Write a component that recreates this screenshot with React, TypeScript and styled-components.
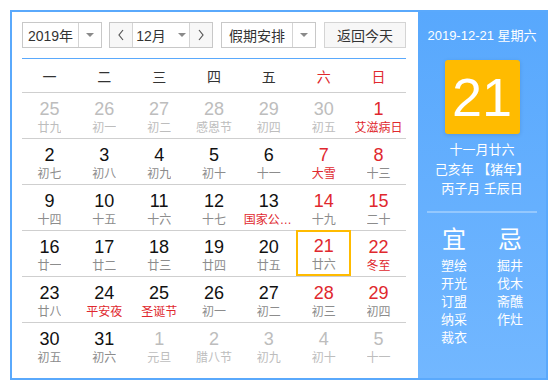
import React from 'react';
import styled, { createGlobalStyle } from 'styled-components';

const GlobalStyle = createGlobalStyle`
  html, body {
    margin: 0;
    padding: 0;
    background: #fff;
    font-family: "Liberation Sans", "Noto Sans CJK SC", sans-serif;
  }
`;

const Page = styled.div`
  padding: 10px;
`;

const Calendar = styled.div`
  display: flex;
  width: 534px;
  height: 366px;
  border: 2px solid #5aa9fc;
`;

const Main = styled.div`
  width: 384px;
  padding: 10px 12px 0 10px;
  background: #fff;
`;

const Toolbar = styled.div`
  display: flex;
  align-items: center;
  height: 26px;
  margin-bottom: 10px;
`;

const Select = styled.div<{ $w: number; $ml?: number }>`
  display: flex;
  box-sizing: border-box;
  width: ${p => p.$w}px;
  height: 26px;
  margin-left: ${p => p.$ml ?? 0}px;
  border: 1px solid #c8c8c8;
  background: #fff;
  font-size: 14px;
  color: #333;
`;

const SelectText = styled.div`
  flex: 1;
  display: flex;
  align-items: center;
  justify-content: center;
`;

const Arrow = styled.div<{ $divider?: boolean }>`
  width: 22px;
  display: flex;
  align-items: center;
  justify-content: center;
  border-left: ${p => (p.$divider ? '1px solid #d4d4d4' : 'none')};
  &::after {
    content: '';
    border-left: 4px solid transparent;
    border-right: 4px solid transparent;
    border-top: 4px solid #8a8a8a;
  }
`;

const NavButton = styled.div`
  width: 22px;
  display: flex;
  align-items: center;
  justify-content: center;
  background: #f7f7f7;
  color: #555;
`;

const MonthText = styled.div`
  flex: 1;
  display: flex;
  align-items: center;
  justify-content: center;
  gap: 12px;
  border-left: 1px solid #d4d4d4;
  border-right: 1px solid #d4d4d4;
  &::after {
    content: '';
    border-left: 4px solid transparent;
    border-right: 4px solid transparent;
    border-top: 4px solid #8a8a8a;
  }
`;

const TodayButton = styled.div`
  box-sizing: border-box;
  margin-left: auto;
  width: 82px;
  height: 26px;
  display: flex;
  align-items: center;
  justify-content: center;
  border: 1px solid #d4d4d4;
  background: #f7f7f7;
  font-size: 14px;
  color: #333;
`;

const Table = styled.div`
  border-top: 1px solid #5aa9fc;
`;

const WeekHead = styled.div`
  display: grid;
  grid-template-columns: repeat(7, 1fr);
  height: 33px;
  border-bottom: 1px solid #cfcfcf;
`;

const WeekName = styled.div<{ $red?: boolean }>`
  display: flex;
  align-items: center;
  justify-content: center;
  font-size: 14px;
  color: ${p => (p.$red ? '#e0282e' : '#333')};
`;

const Row = styled.div<{ $last?: boolean }>`
  display: grid;
  grid-template-columns: repeat(7, 1fr);
  height: 45px;
  border-bottom: ${p => (p.$last ? 'none' : '1px solid #cfcfcf')};
`;

const Cell = styled.div<{ $selected?: boolean }>`
  box-sizing: border-box;
  display: flex;
  flex-direction: column;
  align-items: center;
  padding-top: ${p => (p.$selected ? '3px' : '5px')};
  border: ${p => (p.$selected ? '2px solid #ffbb00' : 'none')};
  margin-top: ${p => (p.$selected ? '-1px' : '0')};
  height: ${p => (p.$selected ? '46px' : '45px')};
`;

const DayNum = styled.div<{ $tone: string }>`
  font-size: 18px;
  line-height: 22px;
  color: ${p => p.$tone};
`;

const Lunar = styled.div<{ $tone: string }>`
  font-size: 12px;
  line-height: 16px;
  max-width: 50px;
  white-space: nowrap;
  overflow: hidden;
  text-overflow: ellipsis;
  color: ${p => p.$tone};
`;

const Side = styled.div`
  width: 128px;
  display: flex;
  flex-direction: column;
  align-items: center;
  background: linear-gradient(180deg, #58a8fd 0%, #72b7ff 100%);
  color: #fff;
`;

const SideDate = styled.div`
  margin-top: 14px;
  font-size: 13px;
  line-height: 20px;
`;

const BigDay = styled.div`
  margin-top: 14px;
  width: 75px;
  height: 74px;
  display: flex;
  align-items: center;
  justify-content: center;
  background: #ffbb00;
  border-radius: 3px;
  box-shadow: 0 1px 4px rgba(0, 0, 0, 0.12);
  font-size: 54px;
  line-height: 1;
`;

const LunarInfo = styled.div`
  margin-top: 6px;
  font-size: 13px;
  line-height: 19.5px;
  text-align: center;
`;

const Divider = styled.div`
  margin-top: 12px;
  width: 110px;
  height: 2px;
  background: rgba(255, 255, 255, 0.3);
`;

const Almanac = styled.div`
  margin-top: 10px;
  display: grid;
  grid-template-columns: 40px 40px;
  column-gap: 16px;
`;

const AlmanacCol = styled.div`
  display: flex;
  flex-direction: column;
  align-items: center;
`;

const AlmanacTitle = styled.div`
  font-size: 24px;
  line-height: 34px;
`;

const AlmanacItem = styled.div`
  font-size: 13px;
  line-height: 18px;
`;

const Chevron: React.FC<{ dir: 'left' | 'right' }> = ({ dir }) => (
  <svg width="8" height="12" viewBox="0 0 8 12">
    <path
      d={dir === 'left' ? 'M6 1 L2 6 L6 11' : 'M2 1 L6 6 L2 11'}
      fill="none"
      stroke="#555"
      strokeWidth="1.2"
    />
  </svg>
);

type Day = { d: number; l: string; kind?: 'other' | 'red'; lred?: boolean; sel?: boolean };

const BLACK = '#111';
const RED = '#e0282e';
const GRAY = '#bdbdbd';
const LGRAY = '#8c8c8c';

const weeks: Day[][] = [
  [
    { d: 25, l: '廿九', kind: 'other' },
    { d: 26, l: '初一', kind: 'other' },
    { d: 27, l: '初二', kind: 'other' },
    { d: 28, l: '感恩节', kind: 'other' },
    { d: 29, l: '初四', kind: 'other' },
    { d: 30, l: '初五', kind: 'other' },
    { d: 1, l: '艾滋病日', kind: 'red', lred: true },
  ],
  [
    { d: 2, l: '初七' },
    { d: 3, l: '初八' },
    { d: 4, l: '初九' },
    { d: 5, l: '初十' },
    { d: 6, l: '十一' },
    { d: 7, l: '大雪', kind: 'red', lred: true },
    { d: 8, l: '十三', kind: 'red' },
  ],
  [
    { d: 9, l: '十四' },
    { d: 10, l: '十五' },
    { d: 11, l: '十六' },
    { d: 12, l: '十七' },
    { d: 13, l: '国家公祭日', lred: true },
    { d: 14, l: '十九', kind: 'red' },
    { d: 15, l: '二十', kind: 'red' },
  ],
  [
    { d: 16, l: '廿一' },
    { d: 17, l: '廿二' },
    { d: 18, l: '廿三' },
    { d: 19, l: '廿四' },
    { d: 20, l: '廿五' },
    { d: 21, l: '廿六', kind: 'red', sel: true },
    { d: 22, l: '冬至', kind: 'red', lred: true },
  ],
  [
    { d: 23, l: '廿八' },
    { d: 24, l: '平安夜', lred: true },
    { d: 25, l: '圣诞节', lred: true },
    { d: 26, l: '初一' },
    { d: 27, l: '初二' },
    { d: 28, l: '初三', kind: 'red' },
    { d: 29, l: '初四', kind: 'red' },
  ],
  [
    { d: 30, l: '初五' },
    { d: 31, l: '初六' },
    { d: 1, l: '元旦', kind: 'other' },
    { d: 2, l: '腊八节', kind: 'other' },
    { d: 3, l: '初九', kind: 'other' },
    { d: 4, l: '初十', kind: 'other' },
    { d: 5, l: '十一', kind: 'other' },
  ],
];

const weekNames = ['一', '二', '三', '四', '五', '六', '日'];
const yi = ['塑绘', '开光', '订盟', '纳采', '裁衣'];
const ji = ['掘井', '伐木', '斋醮', '作灶'];

const numTone = (d: Day) => (d.kind === 'other' ? GRAY : d.kind === 'red' ? RED : BLACK);
const lunarTone = (d: Day) => (d.kind === 'other' ? GRAY : d.lred ? RED : LGRAY);

const App: React.FC = () => (
  <>
    <GlobalStyle />
    <Page>
      <Calendar>
        <Main>
          <Toolbar>
            <Select $w={80}>
              <SelectText>2019年</SelectText>
              <Arrow $divider />
            </Select>
            <Select $w={104} $ml={7}>
              <NavButton>
                <Chevron dir="left" />
              </NavButton>
              <MonthText>12月</MonthText>
              <NavButton>
                <Chevron dir="right" />
              </NavButton>
            </Select>
            <Select $w={95} $ml={8}>
              <SelectText>假期安排</SelectText>
              <Arrow $divider />
            </Select>
            <TodayButton>返回今天</TodayButton>
          </Toolbar>
          <Table>
            <WeekHead>
              {weekNames.map((w, i) => (
                <WeekName key={w} $red={i >= 5}>
                  {w}
                </WeekName>
              ))}
            </WeekHead>
            {weeks.map((week, wi) => (
              <Row key={wi} $last={wi === weeks.length - 1}>
                {week.map((day, di) => (
                  <Cell key={di} $selected={day.sel}>
                    <DayNum $tone={numTone(day)}>{day.d}</DayNum>
                    <Lunar $tone={lunarTone(day)}>{day.l}</Lunar>
                  </Cell>
                ))}
              </Row>
            ))}
          </Table>
        </Main>
        <Side>
          <SideDate>2019-12-21 星期六</SideDate>
          <BigDay>21</BigDay>
          <LunarInfo>
            <div>十一月廿六</div>
            <div>己亥年 【猪年】</div>
            <div>丙子月 壬辰日</div>
          </LunarInfo>
          <Divider />
          <Almanac>
            <AlmanacCol>
              <AlmanacTitle>宜</AlmanacTitle>
              {yi.map(t => (
                <AlmanacItem key={t}>{t}</AlmanacItem>
              ))}
            </AlmanacCol>
            <AlmanacCol>
              <AlmanacTitle>忌</AlmanacTitle>
              {ji.map(t => (
                <AlmanacItem key={t}>{t}</AlmanacItem>
              ))}
            </AlmanacCol>
          </Almanac>
        </Side>
      </Calendar>
    </Page>
  </>
);

export default App;
